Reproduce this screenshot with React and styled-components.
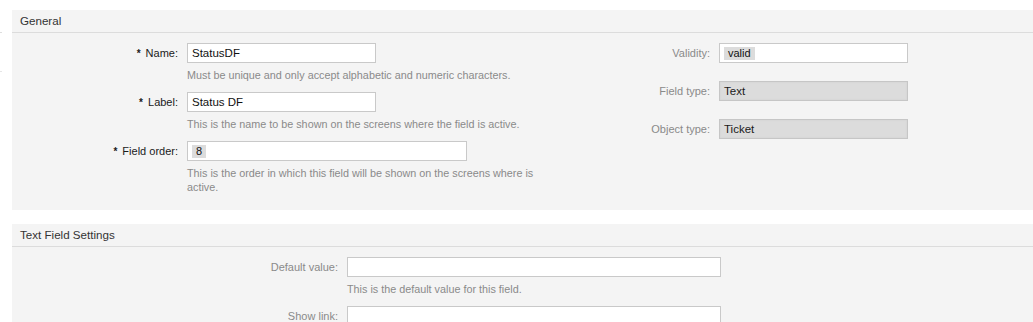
import styled, { createGlobalStyle } from "styled-components"

const GlobalStyle = createGlobalStyle`
	html, body {
		margin: 0;
		padding: 0;
		background: #ffffff;
		overflow: hidden;
	}
	body {
		font-family: "Liberation Sans", Arial, sans-serif;
		font-size: 12px;
		color: #333333;
	}
`

const Page = styled.div`
	display: flex;
	align-items: flex-start;
	padding-top: 10px;
	width: 1033px;
`

const Sidebar = styled.div`
	width: 2px;
	height: 62px;
	margin-right: 10px;
	background: #ffffff;
	border-bottom: 1px solid #e6e6e6;
	box-sizing: border-box;
`

const SidebarHead = styled.div`
	height: 23px;
	border-bottom: 1px solid #dedede;
	box-sizing: border-box;
`

const Main = styled.div`
	flex: 1;
	display: flex;
	flex-direction: column;
	gap: 14px;
`

const Panel = styled.section`
	background: #f4f4f4;
`

const PanelHeader = styled.h2`
	margin: 0;
	height: 23px;
	line-height: 22px;
	padding-left: 8px;
	font-size: 11.6px;
	font-weight: normal;
	color: #333333;
	border-bottom: 1px solid #dcdcdc;
	box-sizing: border-box;
`

const PanelBody = styled.div`
	display: flex;
	align-items: flex-start;
	padding: 10px 0 ${(p) => p.$bottom || 16}px;
`

const Column = styled.div`
	display: flex;
	flex-direction: column;
	gap: ${(p) => p.$gap}px;
`

const Row = styled.div`
	display: grid;
	grid-template-columns: ${(p) => p.$label}px ${(p) => p.$field}px;
	column-gap: 9px;
	align-items: start;
`

const Label = styled.label`
	text-align: right;
	line-height: 20px;
	font-size: 11px;
	white-space: nowrap;
	color: ${(p) => (p.$mandatory ? "#1a1a1a" : "#8a8a8a")};
`

const Marker = styled.span`
	font-weight: bold;
	font-size: 10px;
	margin-right: 5px;
	color: #1a1a1a;
`

const Field = styled.div`
	display: flex;
	flex-direction: column;
	align-items: flex-start;
`

const TextInput = styled.input`
	width: ${(p) => p.$width}px;
	height: 20px;
	box-sizing: border-box;
	margin: 0;
	padding: 0 4px;
	border: 1px solid #c9c9c9;
	background: #ffffff;
	font-family: inherit;
	font-size: 11.5px;
	color: #111111;
	outline: none;
`

const SelectBox = styled.div`
	display: flex;
	align-items: center;
	width: ${(p) => p.$width}px;
	height: 20px;
	box-sizing: border-box;
	padding: 0 4px;
	border: 1px solid #c9c9c9;
	background: #ffffff;
`

const Chip = styled.span`
	background: #dcdcdc;
	color: #111111;
	font-size: 11px;
	padding: 0 4px;
	line-height: 13px;
	height: 13px;
`

const ReadOnly = styled.div`
	width: ${(p) => p.$width}px;
	height: 20px;
	box-sizing: border-box;
	padding: 0 4px;
	line-height: 18px;
	font-size: 11.5px;
	border: 1px solid #c6c6c6;
	background: #dcdcdc;
	box-shadow: inset 0 0 2px #cfcfcf;
	color: #1a1a1a;
`

const Help = styled.p`
	margin: 5px 0 0;
	line-height: 14px;
	font-size: 10.8px;
	max-width: 350px;
	color: #8a8a8a;
`

const generalLeft = [
	{
		label: "Name",
		value: "StatusDF",
		width: 189,
		help: "Must be unique and only accept alphabetic and numeric characters.",
	},
	{
		label: "Label",
		value: "Status DF",
		width: 189,
		help: "This is the name to be shown on the screens where the field is active.",
	},
	{
		label: "Field order",
		chip: "8",
		width: 280,
		help: "This is the order in which this field will be shown on the screens where is active.",
	},
]

const textSettings = [
	{ label: "Default value", help: "This is the default value for this field." },
	{ label: "Show link" },
]

const App = () => {
	return (
		<>
			<GlobalStyle />
			<Page>
				<Sidebar>
					<SidebarHead />
				</Sidebar>
				<Main>
					<Panel>
						<PanelHeader>General</PanelHeader>
						<PanelBody>
							<Column $gap={10}>
								{generalLeft.map((f) => (
									<Row key={f.label} $label={166} $field={350}>
										<Label $mandatory>
											<Marker>*</Marker>
											{f.label}:
										</Label>
										<Field>
											{f.chip ? (
												<SelectBox $width={f.width}>
													<Chip>{f.chip}</Chip>
												</SelectBox>
											) : (
												<TextInput $width={f.width} defaultValue={f.value} />
											)}
											<Help>{f.help}</Help>
										</Field>
									</Row>
								))}
							</Column>
							<Column $gap={18}>
								<Row $label={173} $field={189}>
									<Label>Validity:</Label>
									<SelectBox $width={189}>
										<Chip>valid</Chip>
									</SelectBox>
								</Row>
								<Row $label={173} $field={189}>
									<Label>Field type:</Label>
									<ReadOnly $width={189}>Text</ReadOnly>
								</Row>
								<Row $label={173} $field={189}>
									<Label>Object type:</Label>
									<ReadOnly $width={189}>Ticket</ReadOnly>
								</Row>
							</Column>
						</PanelBody>
					</Panel>
					<Panel>
						<PanelHeader>Text Field Settings</PanelHeader>
						<PanelBody>
							<Column $gap={10}>
								{textSettings.map((f) => (
									<Row key={f.label} $label={326} $field={374}>
										<Label>{f.label}:</Label>
										<Field>
											<TextInput $width={374} defaultValue="" />
											{f.help && <Help>{f.help}</Help>}
										</Field>
									</Row>
								))}
							</Column>
						</PanelBody>
					</Panel>
				</Main>
			</Page>
		</>
	)
}

export default App
